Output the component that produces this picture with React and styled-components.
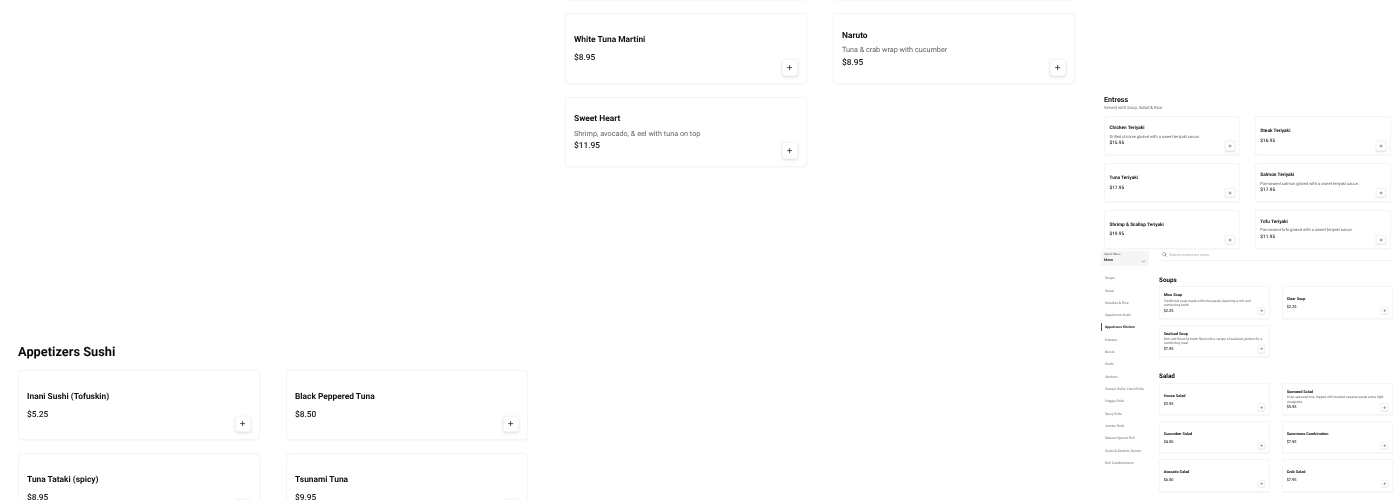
import React from "react";
import styled, { createGlobalStyle } from "styled-components";
import { Plus, Search, ChevronDown } from "lucide-react";

const GlobalStyle = createGlobalStyle`
  html, body {
    margin: 0;
    background: #fff;
    font-family: Roboto, "Liberation Sans", sans-serif;
    color: #1a1a1a;
    text-rendering: geometricPrecision;
  }
  * { box-sizing: border-box; }
`;

const Page = styled.div`
  display: flex;
  width: 1400px;
  height: 500px;
  overflow: hidden;
  background: #fff;
  filter: blur(0.25px);
`;

const LeftColumn = styled.div`
  flex: 0 0 565px;
  padding: 345px 0 0 18px;
`;

const MiddleColumn = styled.div`
  flex: 0 0 535px;
  margin-top: -70px;
`;

const RightColumn = styled.div`
  flex: 0 0 300px;
  padding-top: 96px;
`;

// every size in a section is in em, so one font-size scales the whole section
const Section = styled.section`
  width: 51em;
  font-size: ${(p) => p.$unit}px;
  margin-left: ${(p) => p.$indent || 0}px;
`;

const Heading = styled.h2`
  margin: 0 0 0.75em;
  font-size: 1.28em;
  line-height: 1.2;
  font-weight: 700;
  color: #0a0a0a;
`;

const SectionHead = styled.div`
  margin-bottom: 0.86em;
`;

const EntreeHeading = styled(Heading)`
  margin: 0;
  font-weight: 600;
`;

const Note = styled.p`
  margin: 0.3em 0 0;
  font-size: 0.76em;
  line-height: 1.2;
  color: #666;
`;

const CardGrid = styled.div`
  display: grid;
  grid-template-columns: repeat(2, 24.2em);
  column-gap: 2.6em;
  row-gap: 1.3em;
`;

const Card = styled.article`
  position: relative;
  height: 7.03em;
  padding: 0.3em 0.8em 0;
  display: flex;
  flex-direction: column;
  justify-content: center;
  border: 1px solid #f5f5f5;
  border-radius: 0.4em;
  box-shadow: 0 0.05em 0.15em rgba(0, 0, 0, 0.03);
  background: #fff;
`;

const CardTitle = styled.h3`
  margin: 0 0 0.48em;
  font-size: 0.84em;
  line-height: 1.6em;
  font-weight: 700;
  color: #111;
`;

const CardTitleTight = styled(CardTitle)`
  margin-bottom: 0;
`;

const CardText = styled.p`
  margin: 0;
  font-size: 0.725em;
  line-height: 1.86em;
  color: #5f5f5f;
  max-width: 40.5em;
`;

const CardTextWrapped = styled(CardText)`
  line-height: 1.38em;
`;

const CardPrice = styled.div`
  font-size: 0.84em;
  line-height: 1.6em;
  font-weight: 500;
  color: #1a1a1a;
`;

const AddButton = styled.button`
  position: absolute;
  right: 0.8em;
  bottom: 0.7em;
  width: 1.65em;
  height: 1.65em;
  padding: 0;
  font-size: inherit;
  display: flex;
  align-items: center;
  justify-content: center;
  border: 1px solid #f5f5f5;
  border-radius: 0.25em;
  background: #fff;
  box-shadow: 0 0.1em 0.3em rgba(0, 0, 0, 0.14);
  color: #222;
  svg {
    width: 0.72em;
    height: 0.72em;
  }
`;

const MenuCard = ({ name, text, price, wrapped }) => {
  const Title = text ? CardTitleTight : CardTitle;
  const Desc = wrapped ? CardTextWrapped : CardText;
  return (
    <Card>
      {name && <Title>{name}</Title>}
      {text && <Desc>{text}</Desc>}
      {price && <CardPrice>{price}</CardPrice>}
      {name && (
        <AddButton aria-label={`Add ${name}`}>
          <Plus strokeWidth={2.5} />
        </AddButton>
      )}
    </Card>
  );
};

const Cards = ({ items }) => (
  <CardGrid>
    {items.map((item, i) => (
      <MenuCard key={i} {...item} />
    ))}
  </CardGrid>
);

const MenuLayout = styled.div`
  margin: 0 0 0 1px;
  display: flex;
  gap: 10px;
`;

const Sidebar = styled.aside`
  flex: 0 0 48px;
  padding-top: 2px;
`;

const SelectBox = styled.div`
  position: relative;
  height: 15px;
  padding: 1px 3px;
  background: #f5f5f5;
  border-radius: 1px;
`;

const SelectLabel = styled.div`
  font-size: 3px;
  line-height: 4px;
  color: #666;
`;

const SelectValue = styled.div`
  margin-top: 1px;
  font-size: 3.6px;
  line-height: 6px;
  font-weight: 600;
  color: #222;
`;

const SelectIcon = styled(ChevronDown)`
  position: absolute;
  right: 3px;
  bottom: 2px;
  width: 5px;
  height: 5px;
  color: #333;
`;

const NavList = styled.ul`
  margin: 6px 0 0;
  padding: 0;
  list-style: none;
`;

const NavItem = styled.li`
  position: relative;
  height: 12.32px;
  padding-left: 4px;
  font-size: 3.5px;
  line-height: 12.32px;
  white-space: nowrap;
  font-weight: ${(p) => (p.$active ? 700 : 400)};
  color: ${(p) => (p.$active ? "#222" : "#777")};
  &::before {
    content: "";
    display: ${(p) => (p.$active ? "block" : "none")};
    position: absolute;
    left: 0;
    top: 2px;
    width: 1px;
    height: 8px;
    background: #555;
  }
`;

const MenuMain = styled.div`
  flex: 1;
  min-width: 0;
`;

const SearchBar = styled.div`
  display: flex;
  align-items: center;
  gap: 2px;
  width: 234px;
  height: 12px;
  padding: 0 3px;
  border-bottom: 1px solid #f4f4f4;
  font-size: 3.8px;
  color: #aaa;
  svg {
    width: 5px;
    height: 5px;
    color: #555;
  }
`;

const MenuSection = styled(Section)`
  margin-top: ${(p) => p.$top}px;
`;

const MenuHeading = styled(Heading)`
  margin-bottom: 0.3em;
  font-size: 1.38em;
`;

const appetizers = [
  { name: "Inani Sushi (Tofuskin)", price: "$5.25" },
  { name: "Black Peppered Tuna", price: "$8.50" },
  { name: "Tuna Tataki (spicy)", price: "$8.95" },
  { name: "Tsunami Tuna", price: "$9.95" },
];

const specials = [
  {},
  {},
  { name: "White Tuna Martini", price: "$8.95" },
  { name: "Naruto", text: "Tuna & crab wrap with cucumber", price: "$8.95" },
  { name: "Sweet Heart", text: "Shrimp, avocado, & eel with tuna on top", price: "$11.95" },
];

const entrees = [
  { name: "Chicken Teriyaki", text: "Grilled chicken glazed with a sweet teriyaki sauce.", price: "$15.95" },
  { name: "Steak Teriyaki", price: "$16.95" },
  { name: "Tuna Teriyaki", price: "$17.95" },
  { name: "Salmon Teriyaki", text: "Pan-seared salmon glazed with a sweet teriyaki sauce.", price: "$17.95" },
  { name: "Shrimp & Scallop Teriyaki", price: "$19.95" },
  { name: "Tofu Teriyaki", text: "Pan-seared tofu glazed with a sweet teriyaki sauce.", price: "$11.95" },
];

const soups = [
  { name: "Miso Soup", text: "Traditional soup made with miso paste, featuring a rich and comforting broth.", price: "$2.25", wrapped: true },
  { name: "Clear Soup", price: "$2.25" },
  { name: "Seafood Soup", text: "Rich and flavorful broth filled with a variety of seafood, perfect for a comforting meal.", price: "$7.95", wrapped: true },
];

const salads = [
  { name: "House Salad", price: "$3.95" },
  { name: "Seaweed Salad", text: "Crisp seaweed mix, topped with toasted sesame seeds and a light vinaigrette.", price: "$5.95", wrapped: true },
  { name: "Cucumber Salad", price: "$4.50" },
  { name: "Sunomono Combination", price: "$7.95" },
  { name: "Avocado Salad", price: "$6.50" },
  { name: "Crab Salad", price: "$7.95" },
];

const navItems = [
  "Soups",
  "Salad",
  "Noodles & Rice",
  "Appetizers Sushi",
  "Appetizers Kitchen",
  "Entrees",
  "Bowls",
  "Sushi",
  "Sashimi",
  "Classic Rolls/ Hand Rolls",
  "Veggie Rolls",
  "Spicy Rolls",
  "Jumbo Rolls",
  "Sakura Special Roll",
  "Sushi & Sashimi Dinner",
  "Roll Combinations",
];

export default function App() {
  return (
    <Page>
      <GlobalStyle />
      <LeftColumn>
        <Section $unit={10}>
          <Heading>Appetizers Sushi</Heading>
          <Cards items={appetizers} />
        </Section>
      </LeftColumn>

      <MiddleColumn>
        <Section $unit={10}>
          <Cards items={specials} />
        </Section>
      </MiddleColumn>

      <RightColumn>
        <Section $unit={5.63} $indent={4}>
          <SectionHead>
            <EntreeHeading>Entress</EntreeHeading>
            <Note>Served with Soup, Salad &amp; Rice</Note>
          </SectionHead>
          <Cards items={entrees} />
        </Section>

        <MenuLayout>
          <Sidebar>
            <SelectBox>
              <SelectLabel>Select Menu</SelectLabel>
              <SelectValue>Menu</SelectValue>
              <SelectIcon />
            </SelectBox>
            <NavList>
              {navItems.map((item) => (
                <NavItem key={item} $active={item === "Appetizers Kitchen"}>
                  {item}
                </NavItem>
              ))}
            </NavList>
          </Sidebar>
          <MenuMain>
            <SearchBar>
              <Search />
              Search restaurant menu
            </SearchBar>
            <MenuSection $unit={4.59} $top={15.7}>
              <MenuHeading>Soups</MenuHeading>
              <Cards items={soups} />
            </MenuSection>
            <MenuSection $unit={4.59} $top={16.5}>
              <MenuHeading>Salad</MenuHeading>
              <Cards items={salads} />
            </MenuSection>
          </MenuMain>
        </MenuLayout>
      </RightColumn>
    </Page>
  );
}
